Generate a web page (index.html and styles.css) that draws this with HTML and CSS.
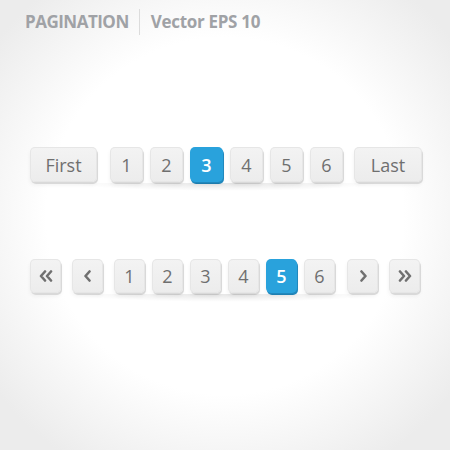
FILE: index.html
```html
<!DOCTYPE html>
<html lang="en">

<head>
    <meta charset="UTF-8">
    <meta name="viewport" content="width=device-width, initial-scale=1.0">
    <title>Pagination</title>
    <link rel="stylesheet" href="styles.css">
</head>

<body>

    <header class="title">
        <span class="title-main">PAGINATION</span>
        <span class="title-sub">Vector EPS 10</span>
    </header>

    <!-- pager with text buttons -->
    <nav class="pager pager-words">
        <a class="page page-wide page-first" href="#">First</a>
        <a class="page" href="#">1</a>
        <a class="page" href="#">2</a>
        <a class="page active" href="#">3</a>
        <a class="page" href="#">4</a>
        <a class="page" href="#">5</a>
        <a class="page" href="#">6</a>
        <a class="page page-wide page-last" href="#">Last</a>
    </nav>

    <!-- pager with arrow buttons -->
    <nav class="pager pager-arrows">
        <a class="page page-arrow page-gap-right" href="#" aria-label="First">
            <svg width="14" height="12" viewBox="0 0 14 12"><path d="M6 1.5 L2 6 L6 10.5 M12 1.5 L8 6 L12 10.5" /></svg>
        </a>
        <a class="page page-arrow page-gap-right" href="#" aria-label="Previous">
            <svg width="8" height="12" viewBox="0 0 8 12"><path d="M5.5 1.5 L1.5 6 L5.5 10.5" /></svg>
        </a>
        <a class="page" href="#">1</a>
        <a class="page" href="#">2</a>
        <a class="page" href="#">3</a>
        <a class="page" href="#">4</a>
        <a class="page active" href="#">5</a>
        <a class="page" href="#">6</a>
        <a class="page page-arrow page-gap-left" href="#" aria-label="Next">
            <svg width="8" height="12" viewBox="0 0 8 12"><path d="M2.5 1.5 L6.5 6 L2.5 10.5" /></svg>
        </a>
        <a class="page page-arrow page-gap-left" href="#" aria-label="Last">
            <svg width="14" height="12" viewBox="0 0 14 12"><path d="M2 1.5 L6 6 L2 10.5 M8 1.5 L12 6 L8 10.5" /></svg>
        </a>
    </nav>

</body>

</html>
```

FILE: styles.css
```css
html, body {
    height: 100%;
}

body {
    margin: 0;
    font-family: "Open Sans", Arial, sans-serif;
    background: radial-gradient(ellipse 64% 64% at 50% 48%, #ffffff 62%, #ececec 100%);
    background-color: #e9e9e9;
}

.title {
    display: flex;
    align-items: center;
    padding: 9px 0 0 25px;
    color: #a0a2a6;
    font-size: 17px;
    font-weight: 700;
    line-height: 26px;
}

.title-main {
    letter-spacing: -0.5px;
    padding-right: 10px;
}

.title-sub {
    border-left: 1px solid #dcdcdc;
    padding-left: 11px;
    letter-spacing: -0.3px;
}

.pager {
    display: flex;
    gap: 7px;
    padding-left: 30px;
    position: relative;
}

/* soft ground shadow under each row */
.pager::after {
    content: "";
    position: absolute;
    left: 70px;
    right: 70px;
    bottom: -9px;
    height: 8px;
    background: radial-gradient(ellipse at 50% 0%, rgba(0, 0, 0, 0.10), rgba(0, 0, 0, 0) 70%);
}

.pager-words {
    margin-top: 112px;
}

.pager-arrows {
    margin-top: 77px;
}

.page {
    display: flex;
    align-items: center;
    justify-content: center;
    box-sizing: border-box;
    width: 33px;
    height: 35px;
    border-radius: 5px;
    background: linear-gradient(#f3f3f3, #ececec);
    box-shadow: inset 0 0 0 1px #e6e6e6, 1px 2px 0 #d9d9d9, 0 3px 4px rgba(0, 0, 0, 0.06);
    color: #6f6f6f;
    font-size: 18px;
    text-decoration: none;
}

.pager-arrows .page {
    width: 31px;
    height: 34px;
}

.page-wide {
    width: 67px;
}

.page-first {
    margin-right: 6px;
}

.page-last {
    width: 68px;
    margin-left: 4px;
}

.page.active {
    background: #29a2dc;
    box-shadow: 1px 2px 0 #2188bd, 0 3px 4px rgba(0, 0, 0, 0.06);
    color: #ffffff;
    font-weight: 600;
}

.page-arrow svg path {
    fill: none;
    stroke: #707070;
    stroke-width: 2.6;
    stroke-linecap: round;
    stroke-linejoin: round;
}

.page-gap-right {
    margin-right: 4px;
}

.page-gap-left {
    margin-left: 5px;
}

.pager-arrows .page-gap-left + .page-gap-left {
    margin-left: 4px;
}
```
